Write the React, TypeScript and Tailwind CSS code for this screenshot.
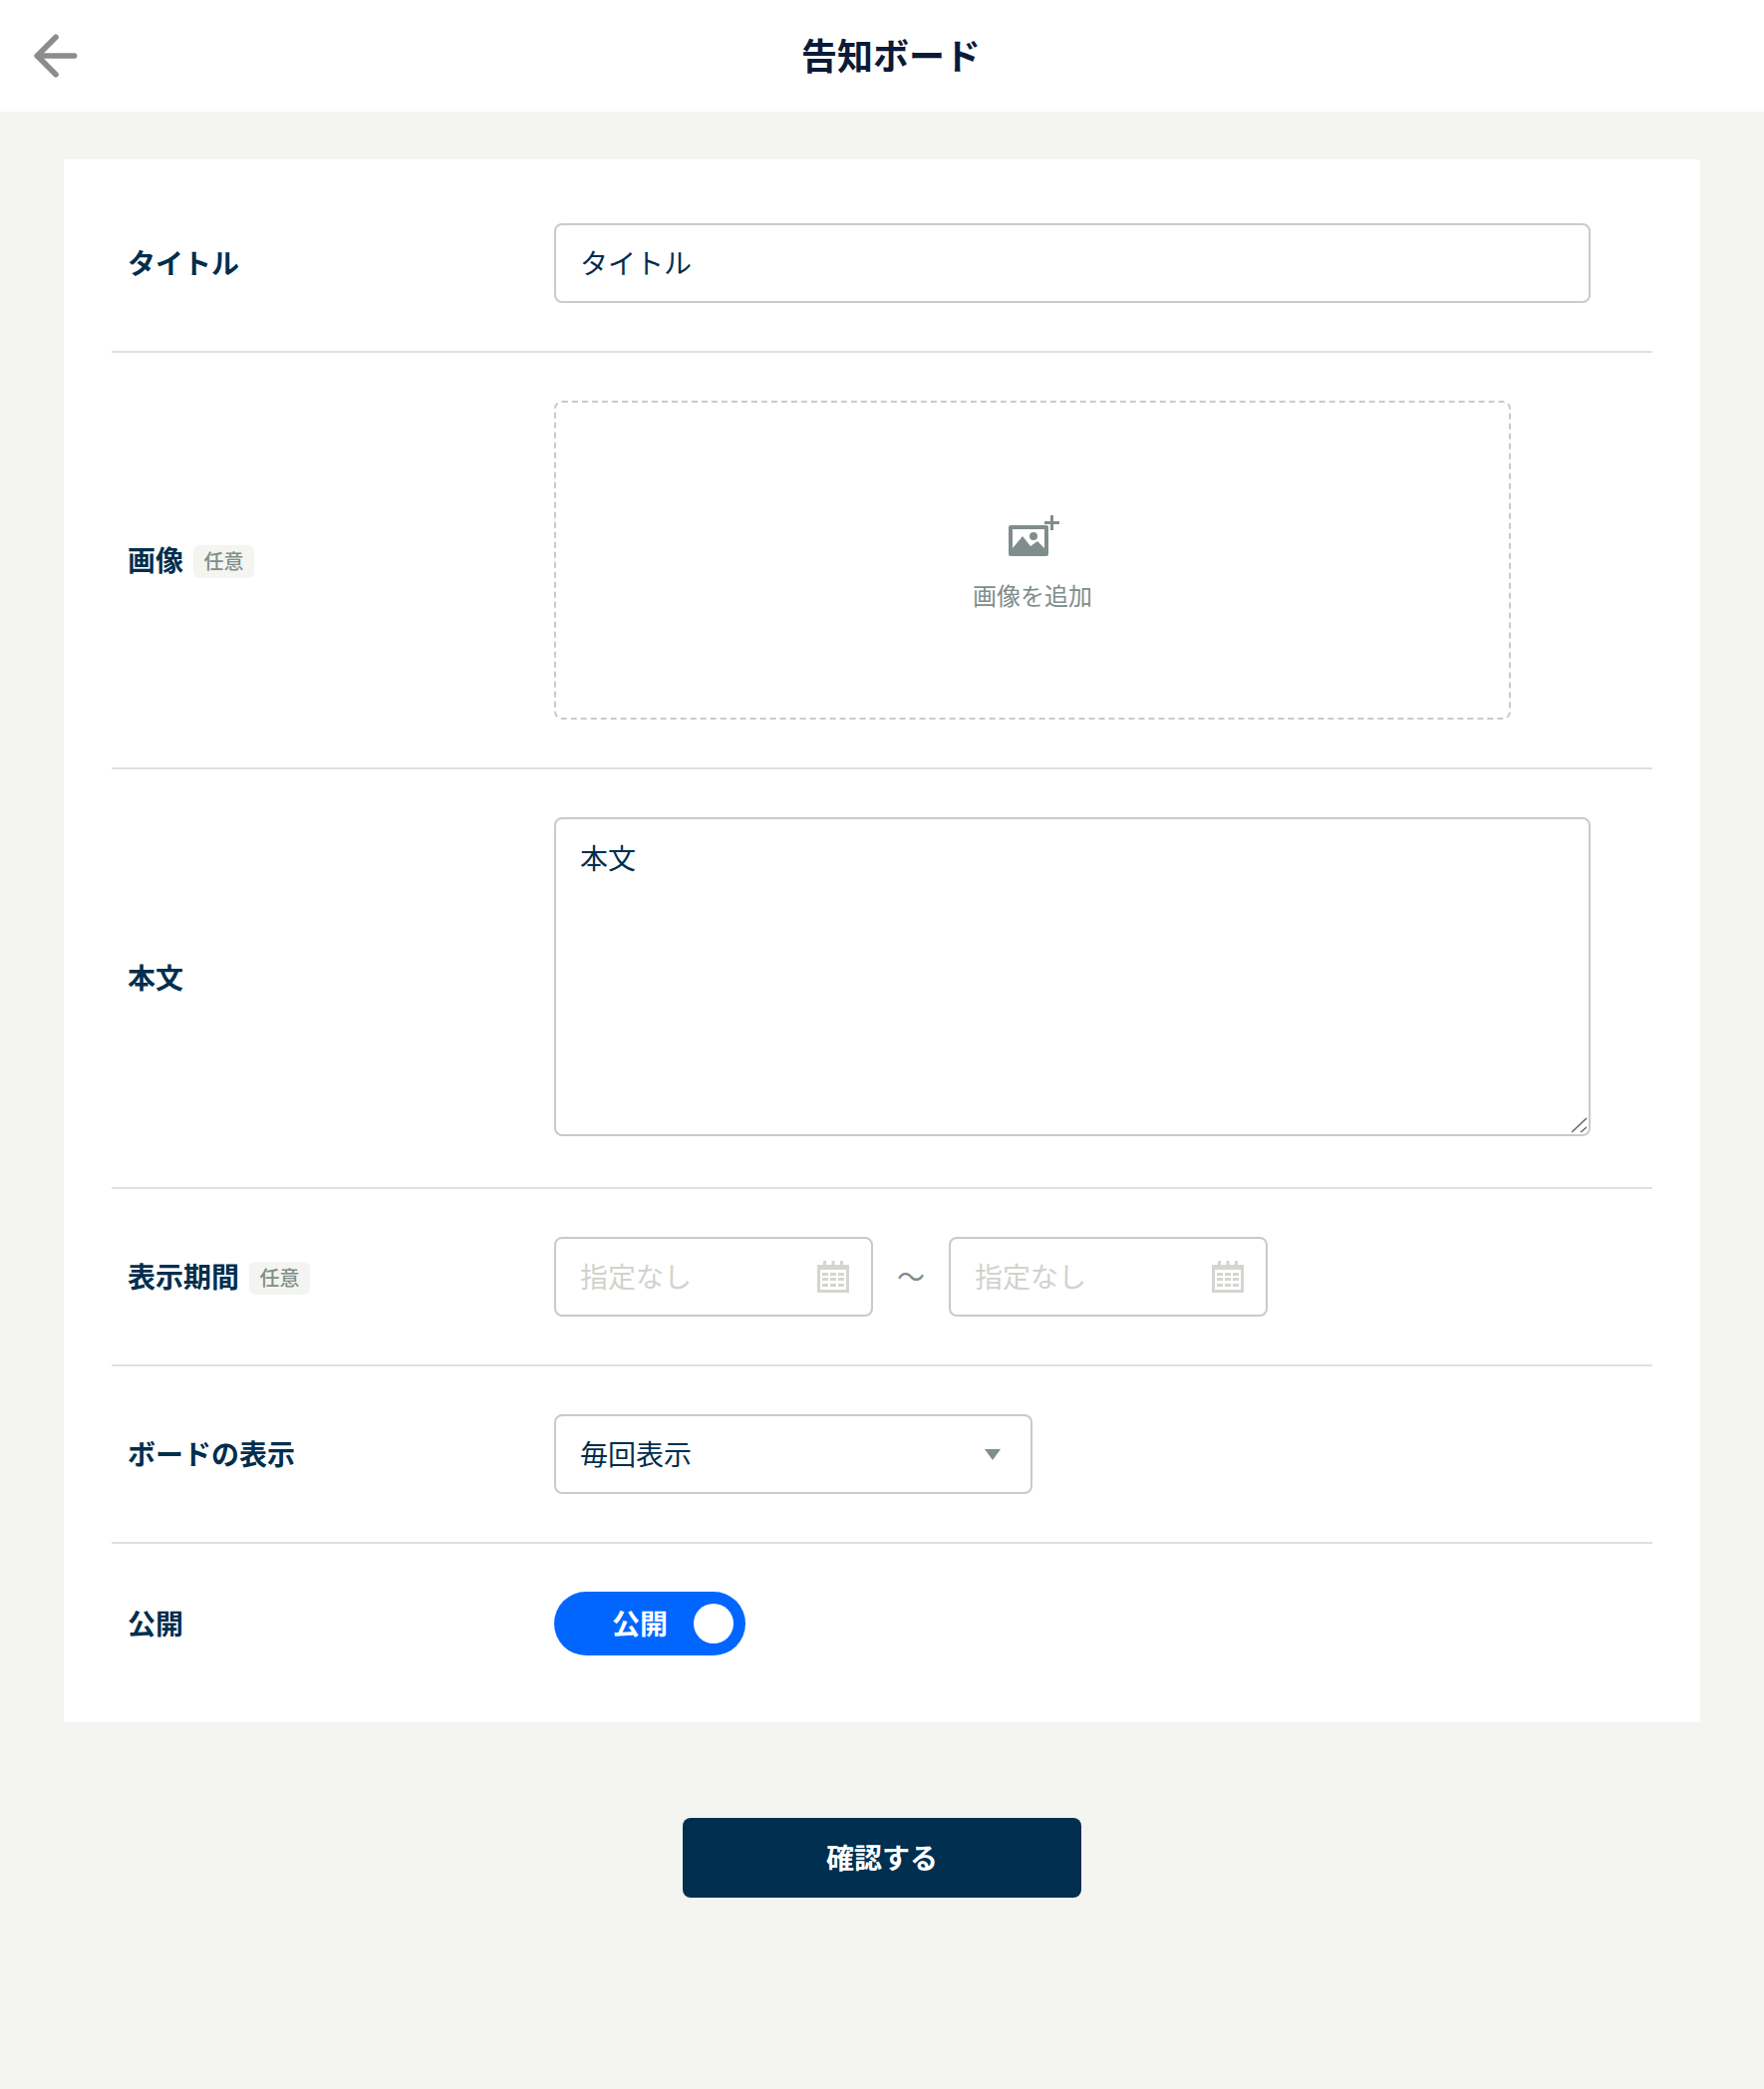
import type { ReactNode } from 'react';
import { ArrowLeft } from 'lucide-react';

function OptionalBadge() {
  return (
    <span className="mt-[2px] ml-[10px] flex h-[33px] w-[61px] items-center justify-center rounded-[6px] bg-[#f4f4f0] text-[20px] font-medium text-[#7f8d8c]">
      任意
    </span>
  );
}

function Row({ label, optional, children, last }: { label: string; optional?: boolean; children: ReactNode; last?: boolean }) {
  return (
    <div className={`flex items-center px-4 py-12 ${last ? '' : 'border-b-2 border-[#dfe1dc]'}`}>
      <div className="flex w-[428px] shrink-0 items-center">
        <span className="pb-[3px] text-[28px] leading-[40px] font-bold text-[#002e4e]">{label}</span>
        {optional && <OptionalBadge />}
      </div>
      <div className="flex-1">{children}</div>
    </div>
  );
}

function ImageAddIcon() {
  return (
    <svg width="52" height="42" viewBox="0 0 52 42" fill="none">
      <rect x="0" y="10" width="40" height="31" rx="2" fill="#7f8d8c" />
      <rect x="4" y="14" width="32" height="23" fill="#fff" />
      <path fill="#7f8d8c" d="M4 33 14 21 22 31 29 26 36 33V37H4Z" />
      <circle cx="25" cy="21" r="4" fill="#7f8d8c" />
      <path fill="#7f8d8c" d="M42 0h3v6h6v3h-6v6h-3V9h-6V6h6Z" />
    </svg>
  );
}

function CalendarIcon() {
  return (
    <svg width="32" height="32" viewBox="0 0 32 32" fill="#d3d6d0">
      <path d="M6 0h3v7H6zM14.5 0h3v7h-3zM23 0h3v7h-3z" />
      <path fillRule="evenodd" d="M0 4h32v28H0Zm3 5v20h26V9Z" />
      <path d="M5 12h6v3H5zM13 12h6v3h-6zM21 12h6v3h-6zM5 17h6v3H5zM13 17h6v3h-6zM21 17h6v3h-6zM5 23h6v3H5zM13 23h6v3h-6zM21 23h6v3h-6z" />
    </svg>
  );
}

function DateField() {
  return (
    <div className="flex h-20 w-[320px] items-center justify-between rounded-[8px] border-2 border-[#c8ccc4] pr-[22px] pl-6">
      <span className="pb-[2px] text-[28px] text-[#d0d3cd]">指定なし</span>
      <CalendarIcon />
    </div>
  );
}

export default function App() {
  return (
    <div className="min-h-screen bg-[#f4f4f0] font-['Noto_Sans_CJK_JP','Noto_Sans',sans-serif]">
      <header className="flex h-28 items-center bg-white px-6">
        <ArrowLeft className="h-16 w-16 text-[#8c8c8c]" strokeWidth={2.1} />
        <h1 className="flex-1 pr-[46px] pb-[5px] text-center text-[36px] font-bold text-[#0b1a38]">告知ボード</h1>
      </header>

      <main className="flex flex-col items-center px-16 pt-12">
        <div className="h-[1568px] w-full bg-white px-12 pt-4">
          <Row label="タイトル">
            <input
              readOnly
              value="タイトル"
              className="block h-20 w-[1040px] rounded-[8px] border-2 border-[#c8ccc4] px-6 pb-[2px] text-[28px] text-[#002e4e] outline-none"
            />
          </Row>

          <Row label="画像" optional>
            <div className="flex h-[320px] w-[960px] flex-col items-center justify-center rounded-[8px] border-2 border-dashed border-[#c8ccc4] pt-[8px]">
              <div className="ml-[4px]">
                <ImageAddIcon />
              </div>
              <span className="mt-[20px] text-[24px] leading-[36px] text-[#7f8d8c]">画像を追加</span>
            </div>
          </Row>

          <Row label="本文">
            <div className="relative w-[1040px] pb-[3px]">
              <textarea
                readOnly
                value="本文"
                className="block h-[320px] w-full resize-none rounded-[8px] border-2 border-[#c8ccc4] px-6 pt-[18px] text-[28px] leading-[40px] text-[#002e4e] outline-none"
              />
              <svg className="absolute right-[3px] bottom-[6px]" width="16" height="16" viewBox="0 0 16 16" stroke="#666" strokeWidth="1.6">
                <path d="M0 15 15 1M9 15 15 10" />
              </svg>
            </div>
          </Row>

          <Row label="表示期間" optional>
            <div className="flex items-center">
              <DateField />
              <span className="w-[76px] pb-[2px] text-center text-[28px] text-[#7f8d8c]">〜</span>
              <DateField />
            </div>
          </Row>

          <Row label="ボードの表示">
            <div className="flex h-20 w-[480px] items-center justify-between rounded-[8px] border-2 border-[#c8ccc4] pr-[30px] pl-6">
              <span className="pb-[2px] text-[28px] text-[#002e4e]">毎回表示</span>
              <svg width="16" height="11" viewBox="0 0 16 11" fill="#7f8d8c">
                <path d="M0 0h16L8 11Z" />
              </svg>
            </div>
          </Row>

          <Row label="公開" last>
            <div className="flex h-16 w-[192px] items-center justify-end rounded-full bg-[#0066ff] pr-3">
              <span className="mr-[26px] pb-[2px] text-[28px] font-bold text-white">公開</span>
              <span className="h-10 w-10 rounded-full bg-white" />
            </div>
          </Row>
        </div>

        <button className="mt-24 h-20 w-[400px] rounded-[8px] bg-[#002f50] pb-[2px] text-[28px] font-bold text-white">確認する</button>
      </main>
    </div>
  );
}
